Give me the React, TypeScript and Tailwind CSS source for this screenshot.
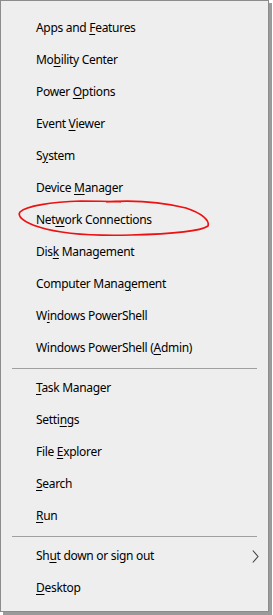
import type { ReactNode } from "react";

type Item = { before: string; key: string; after: string; submenu?: boolean };

const groups: Item[][] = [
  [
    { before: "Apps and ", key: "F", after: "eatures" },
    { before: "Mo", key: "b", after: "ility Center" },
    { before: "Power ", key: "O", after: "ptions" },
    { before: "Event ", key: "V", after: "iewer" },
    { before: "S", key: "y", after: "stem" },
    { before: "Device ", key: "M", after: "anager" },
    { before: "Net", key: "w", after: "ork Connections" },
    { before: "Dis", key: "k", after: " Management" },
    { before: "Computer Mana", key: "g", after: "ement" },
    { before: "W", key: "i", after: "ndows PowerShell" },
    { before: "Windows PowerShell (", key: "A", after: "dmin)" },
  ],
  [
    { before: "", key: "T", after: "ask Manager" },
    { before: "Setti", key: "n", after: "gs" },
    { before: "File ", key: "E", after: "xplorer" },
    { before: "", key: "S", after: "earch" },
    { before: "", key: "R", after: "un" },
  ],
  [
    { before: "Sh", key: "u", after: "t down or sign out", submenu: true },
    { before: "", key: "D", after: "esktop" },
  ],
];

function MenuRow({ item }: { item: Item }) {
  return (
    <div className="flex h-8 items-center justify-between pl-[35px] pr-[9px]">
      <span className="whitespace-pre">
        {item.before}
        <span className="underline decoration-1 underline-offset-2">{item.key}</span>
        {item.after}
      </span>
      {item.submenu && (
        <svg width="7" height="13" viewBox="0 0 7 13" className="mt-[1px]">
          <path d="M0.8 0.5 L6 6.5 L0.8 12.5" fill="none" stroke="#444" strokeWidth="1.1" />
        </svg>
      )}
    </div>
  );
}

function Separator() {
  return (
    <div className="flex h-2 items-center px-[11px]">
      <div className="h-px w-full bg-[#a0a0a0]" />
    </div>
  );
}

export default function App() {
  const blocks: ReactNode[] = [];
  groups.forEach((group, gi) => {
    if (gi > 0) blocks.push(<Separator key={`sep-${gi}`} />);
    group.forEach((item) => blocks.push(<MenuRow key={item.before + item.key} item={item} />));
  });

  return (
    <div className="h-[615px] w-[273px] bg-white">
      <div className="relative h-[612px] w-[269px] border border-[#8c8c8c] bg-[#eeeeee] pt-[11px] text-[12px] tracking-[-0.3px] text-black shadow-[3px_3px_0_0_#9a9a9a] [font-family:'Noto_Sans',sans-serif]">
        {blocks}
        {/* hand-drawn red circle around Network Connections */}
        <svg className="pointer-events-none absolute left-0 top-0" width="269" height="612" viewBox="0 0 269 612">
          <path
            d="M105 201 C130 199 160 201 185 207 C200 212 209 219 207 225 C200 230 170 233 130 234 C95 235 60 233 38 226 C22 221 16 215 19 211 C25 205 50 201 80 200 C95 200 110 200 120 201"
            fill="none"
            stroke="#ee1111"
            strokeWidth="1.7"
          />
        </svg>
      </div>
    </div>
  );
}
